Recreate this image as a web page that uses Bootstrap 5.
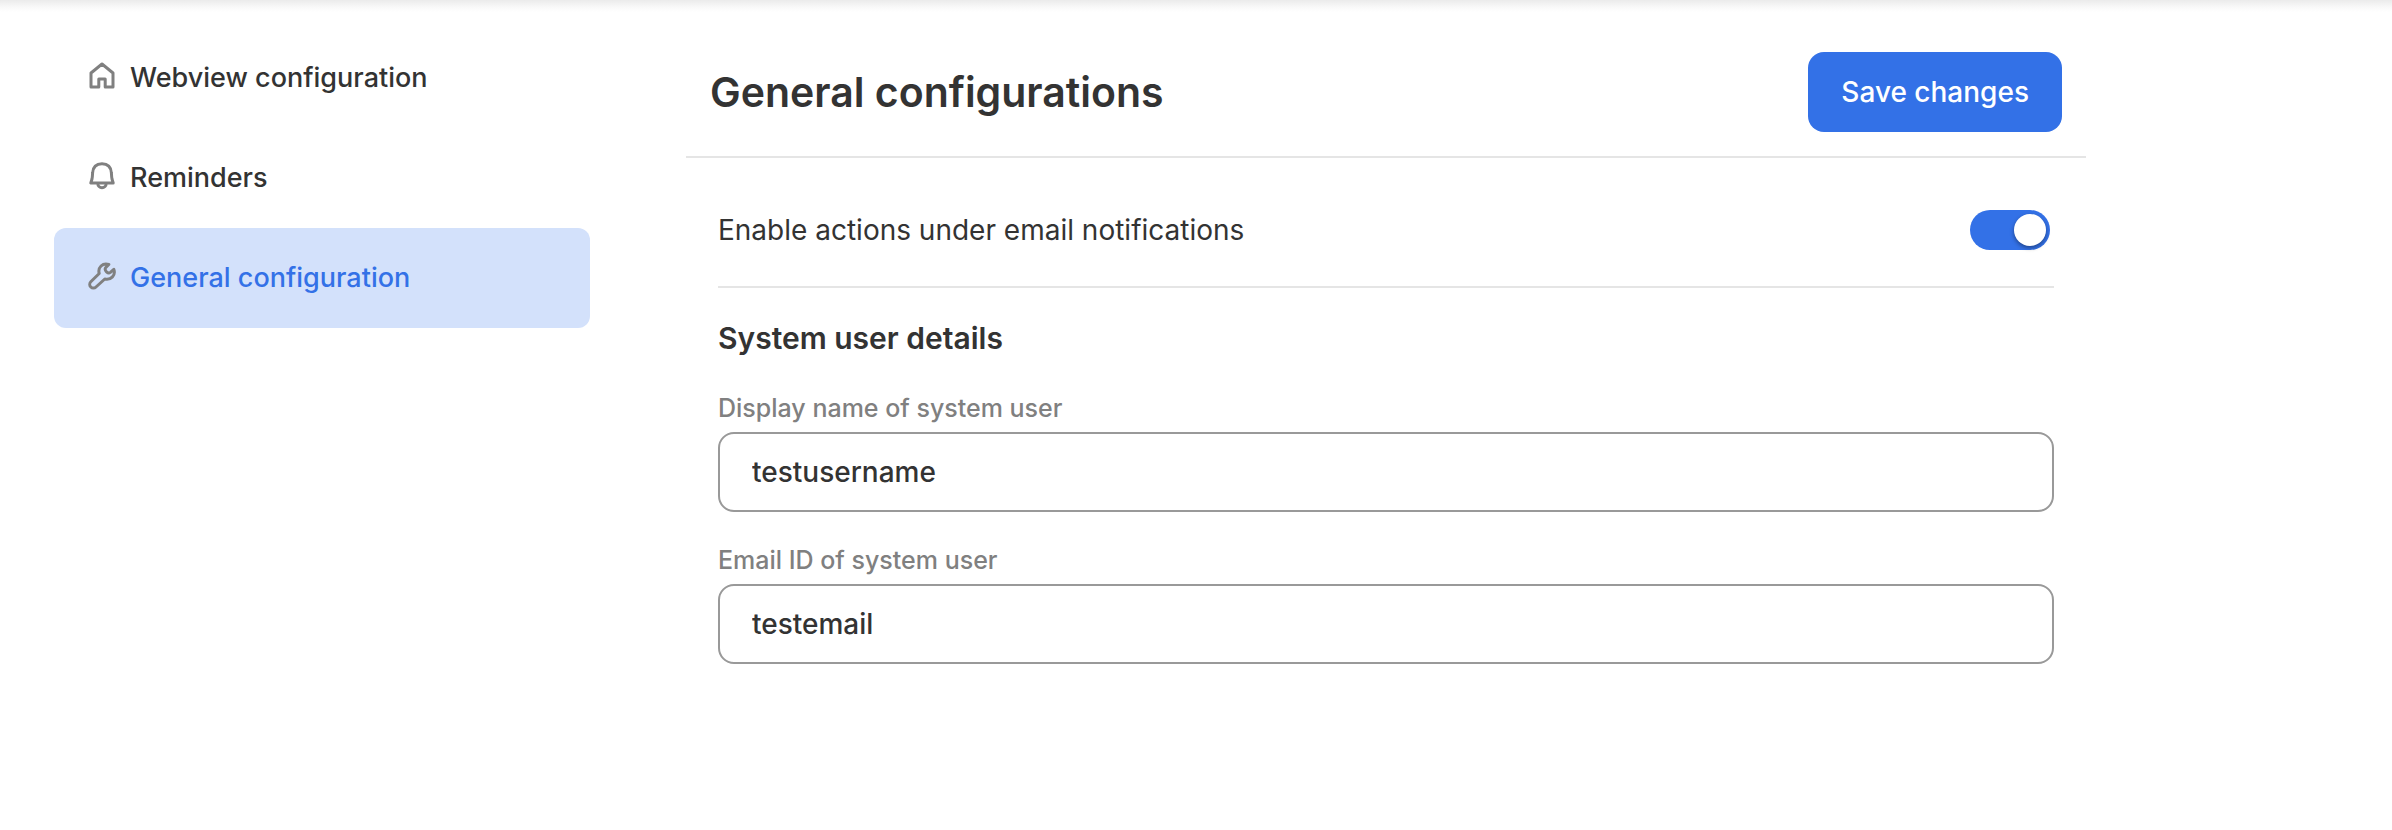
<!DOCTYPE html>
<html lang="en">
<head>
<meta charset="utf-8">
<meta name="viewport" content="width=device-width, initial-scale=1">
<title>General configurations</title>
<link href="https://cdn.jsdelivr.net/npm/bootstrap@5.3.0/dist/css/bootstrap.min.css" rel="stylesheet">
<style>
  :root { --brand: #3371e7; --ink: #333333; --muted: #808080; --rule: #e5e5e5; }
  body { font-family: Inter, "Open Sans", sans-serif; font-size: 28px; line-height: 40px; color: var(--ink); background: #fff; }
  .top-shade { height: 12px; background: linear-gradient(#ebebeb, #f9f9f9 60%, #fff); }
  .layout { padding-top: 16px; }
  .side { padding-left: 54px; padding-right: 8px; }
  .side .nav-link { gap: 12px; padding: 30px 32px; font-size: 27px; font-weight: 500; color: var(--ink); border-radius: 12px; }
  .side .nav-link.active { color: var(--brand); background: #d3e1fb; }
  .side svg { width: 32px; height: 32px; fill: none; stroke: var(--muted); stroke-width: 3; stroke-linejoin: round; stroke-linecap: round; }
  .panel { margin-left: 88px; margin-right: 306px; min-width: 0; }
  .panel-head { padding: 24px; border-bottom: 2px solid var(--rule); }
  .panel-head h1 { font-size: 41px; line-height: 48px; font-weight: 600; }
  .btn-save { --bs-btn-color: #fff; --bs-btn-bg: var(--brand); --bs-btn-hover-color: #fff; --bs-btn-hover-bg: #2a62cc; --bs-btn-active-color: #fff; --bs-btn-active-bg: #2558b8; padding: 20px 33px; border: 0; border-radius: 16px; font-size: 28px; line-height: 40px; font-weight: 500; }
  .panel-body { padding: 16px 32px; }
  .setting { padding: 36px 4px 36px 0; border-bottom: 2px solid var(--rule); }
  .form-switch .form-check-input.toggle {
    width: 80px; height: 40px; margin: 0; border: 0; border-radius: 20px; background-color: #999;
    background-image: none; display: flex; align-items: center; padding: 4px;
  }
  .toggle::before { content: ""; width: 32px; height: 32px; border-radius: 50%; background: #fff; box-shadow: 0 2px 4px rgba(0,0,0,.4); }
  .form-switch .form-check-input.toggle:checked { background-color: var(--brand); background-image: none; justify-content: flex-end; }
  .details { gap: 30px; padding-top: 28px; }
  .details h2 { font-size: 30px; line-height: 44px; font-weight: 600; }
  .details .form-label { margin-bottom: 6px; font-size: 25px; line-height: 36px; font-weight: 500; color: var(--muted); }
  .details .form-control { padding: 18px 32px; border: 2px solid #999; border-radius: 16px; font-size: 28px; line-height: 40px; font-weight: 500; color: var(--ink); }
  @media (max-width: 1199px) {
    .side { padding: 0 16px; }
    .panel { margin: 0 16px; }
  }
</style>
</head>
<body>
<div class="top-shade"></div>
<div class="layout d-flex flex-column flex-xl-row">
  <nav class="side col-12 col-xl-3 flex-shrink-0" aria-label="Settings">
    <div class="nav nav-pills flex-column">
      <a class="nav-link d-flex align-items-center" href="#webview">
        <svg viewBox="0 0 32 32" aria-hidden="true"><path d="M5 25V11L16 2l11 9v14h-7.800v-8h-6.400v8z"/></svg>
        <span>Webview configuration</span>
      </a>
      <a class="nav-link d-flex align-items-center" href="#reminders">
        <svg viewBox="0 0 32 32" aria-hidden="true"><path d="M4.800 21H27.200L26 17C25.500 15 25.600 13 25.400 11 25 5 21.500 1.800 16 1.800S7 5 6.600 11C6.400 13 6.500 15 6 17zM11.800 21.500a4.200 4.200 0 0 0 8.400 0"/></svg>
        <span>Reminders</span>
      </a>
      <a class="nav-link active d-flex align-items-center" href="#general" aria-current="page">
        <svg viewBox="0 0 32 32" aria-hidden="true"><path d="M22.800 2.400C16.500 0.500 11.600 5.500 13.200 11.500L4.800 19.800a3.600 3.600 0 0 0 5.200 5.200L18.800 17C25 18.300 30 13.300 27.800 7.300L24.400 10.400C22 12.200 18 8.600 19.600 5.800Z"/></svg>
        <span>General configuration</span>
      </a>
    </div>
  </nav>
  <main class="panel flex-grow-1">
    <header class="panel-head d-flex align-items-center justify-content-between">
      <h1 class="mb-0">General configurations</h1>
      <button type="submit" form="general-form" class="btn btn-save">Save changes</button>
    </header>
    <form id="general-form" class="panel-body">
      <div class="setting form-switch d-flex align-items-center justify-content-between">
        <label for="email-actions">Enable actions under email notifications</label>
        <input class="form-check-input toggle flex-shrink-0" type="checkbox" role="switch" id="email-actions" checked>
      </div>
      <div class="details d-flex flex-column">
        <h2 class="mb-0">System user details</h2>
        <div>
          <label class="form-label d-block" for="display-name">Display name of system user</label>
          <input class="form-control" type="text" id="display-name" value="testusername">
        </div>
        <div>
          <label class="form-label d-block" for="email-id">Email ID of system user</label>
          <input class="form-control" type="text" id="email-id" value="testemail">
        </div>
      </div>
    </form>
  </main>
</div>
<script src="https://cdn.jsdelivr.net/npm/bootstrap@5.3.0/dist/js/bootstrap.bundle.min.js"></script>
</body>
</html>
